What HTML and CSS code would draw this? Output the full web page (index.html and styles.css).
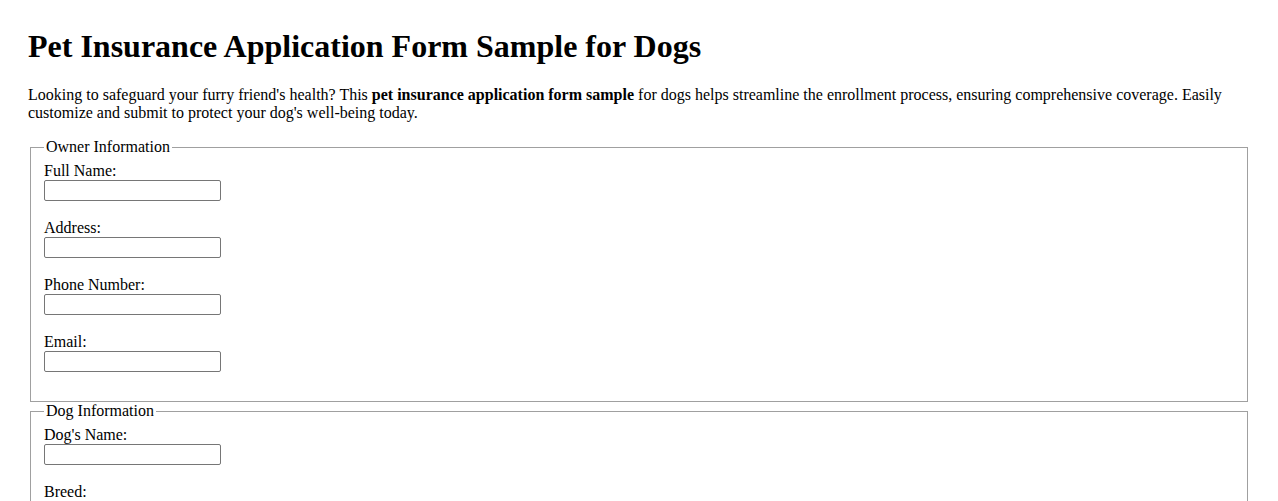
FILE: index.html
```html
<!DOCTYPE html>
<html lang="en">
<head>
<meta charset="utf-8">
<title>Pet Insurance Application Form Sample for Dogs</title>
<link rel="stylesheet" href="styles.css">
</head>
<body>
<h1 class="title">Pet Insurance Application Form Sample for Dogs</h1>
<p class="intro">Looking to safeguard your furry friend's health? This <strong>pet insurance application form sample</strong> for dogs helps streamline the enrollment process, ensuring comprehensive coverage. Easily customize and submit to protect your dog's well-being today.</p>
<form class="form">
  <fieldset class="group">
    <legend class="group-title">Owner Information</legend>
    <div class="field"><label class="field-label" for="fullname">Full Name:</label><input class="field-input" type="text" id="fullname"></div>
    <div class="field"><label class="field-label" for="address">Address:</label><input class="field-input" type="text" id="address"></div>
    <div class="field"><label class="field-label" for="phone">Phone Number:</label><input class="field-input" type="text" id="phone"></div>
    <div class="field"><label class="field-label" for="email">Email:</label><input class="field-input" type="text" id="email"></div>
  </fieldset>
  <fieldset class="group">
    <legend class="group-title">Dog Information</legend>
    <div class="field"><label class="field-label" for="dogname">Dog's Name:</label><input class="field-input" type="text" id="dogname"></div>
    <div class="field"><label class="field-label" for="breed">Breed:</label><input class="field-input" type="text" id="breed"></div>
    <div class="field"><label class="field-label" for="age">Age:</label><input class="field-input" type="text" id="age"></div>
  </fieldset>
</form>
</body>
</html>
```
FILE: styles.css
```css
html, body {
  background: #fff;
}
body {
  margin: 0;
  padding: 28px;
  font-family: "Liberation Serif", "Times New Roman", serif;
  font-size: 16px;
  color: #000;
}
.title {
  font-size: 32px;
  font-weight: bold;
  margin: 0 0 21.44px;
}
.intro {
  margin: 0 0 16px;
}
.form {
  margin: 0;
}
.group {
  margin: 0 2px;
  padding: 5.6px 13px 11px;
  border: 1px solid #a0a0a0;
}
.group-title {
  padding: 0 2px;
}
.field {
  display: flex;
  flex-direction: column;
  align-items: flex-start;
  margin-bottom: 18px;
}
.field-label {
  display: block;
}
.field-input {
  display: block;
  width: 177px;
  height: 21px;
  box-sizing: border-box;
  border: 1px solid #767676;
  border-radius: 2px;
  padding: 1px 2px;
  margin: 0;
  font-family: "Liberation Sans", Arial, sans-serif;
  font-size: 13.33px;
  background: #fff;
}
```
